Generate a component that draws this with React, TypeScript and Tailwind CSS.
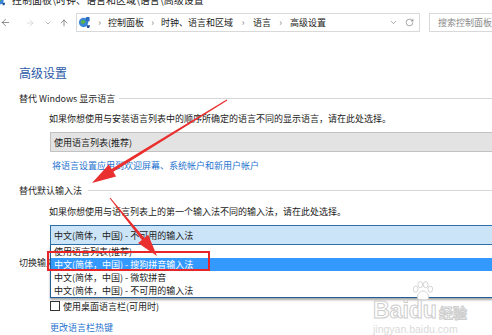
import React from 'react';
import { ArrowLeft, ArrowRight, ArrowUp, ChevronDown, RotateCw } from 'lucide-react';

const ControlPanelIcon: React.FC<{ className?: string }> = ({ className }) => (
  <svg viewBox="0 0 14 14" className={className}>
    <circle cx="6" cy="7" r="5" fill="#3a86d8" />
    <path d="M3 5.5 L6 4 L8.5 6 L6 8.5 L3.5 8 Z" fill="#57b04a" />
    <rect x="8.5" y="1" width="4" height="5" rx="0.8" fill="#2c6fc0" />
    <path d="M9 10 L13 10 L12 13 L10 13 Z" fill="#1c4f9a" />
  </svg>
);

const BaiduPaw: React.FC<{ className?: string }> = ({ className }) => (
  <svg viewBox="0 0 26 22" className={className} fill="white" stroke="#cfcfcf" strokeWidth="1">
    <ellipse cx="5" cy="9" rx="2.6" ry="3.4" />
    <ellipse cx="10" cy="4" rx="2.6" ry="3.4" />
    <ellipse cx="16" cy="4" rx="2.6" ry="3.4" />
    <ellipse cx="21" cy="9" rx="2.6" ry="3.4" />
    <path d="M13 11 C9 11 6 16 7 19 C8 21.5 11 20.5 13 20.5 C15 20.5 18 21.5 19 19 C20 16 17 11 13 11 Z" />
  </svg>
);

const Crumb: React.FC<{ children: React.ReactNode }> = ({ children }) => (
  <span className="whitespace-nowrap text-[#1a1a1a]">{children}</span>
);

const Sep = () => <span className="w-[17px] text-center text-[#7a7a7a]">›</span>;

const SectionTitle: React.FC<{ label: string; gap: string }> = ({ label, gap }) => (
  <div className="flex h-[14px] items-center">
    <span className="whitespace-nowrap text-[#1e1e1e]">{label}</span>
    <div className={`h-px flex-1 bg-[#d7d7d7] ${gap}`} />
  </div>
);

const options = [
  '使用语言列表(推荐)',
  '中文(简体，中国) - 搜狗拼音输入法',
  '中文(简体，中国) - 微软拼音',
  '中文(简体，中国) - 不可用的输入法',
];

export default function App() {
  return (
    <div className="relative h-[335px] w-[492px] overflow-hidden bg-white font-['Noto_Sans_CJK_SC',sans-serif] text-[9px] leading-none text-[#1a1a1a]">
      {/* window title, cut off at the top */}
      <div className="h-[6px] overflow-hidden">
        <div className="-mt-[6px] flex h-[12px] items-center">
          <ControlPanelIcon className="ml-[-5px] h-[11px] w-[11px]" />
          <span className="ml-[6px] whitespace-nowrap text-[10px] text-[#222]">控制面板\时钟、语言和区域\语言\高级设置</span>
        </div>
      </div>

      {/* address bar */}
      <div className="flex h-[26px] items-end">
        <div className="flex h-[19px] items-center">
          <ArrowLeft className="ml-[0px] h-[11px] w-[11px] text-[#555]" strokeWidth={1.4} />
          <ArrowRight className="ml-[14px] h-[10px] w-[10px] text-[#c4c4c4]" strokeWidth={1.4} />
          <ChevronDown className="ml-[9px] h-[8px] w-[8px] text-[#777]" strokeWidth={1.6} />
          <ArrowUp className="ml-[7px] h-[10px] w-[10px] text-[#555]" strokeWidth={1.5} />
        </div>
        <div className="ml-[7px] flex h-[19px] w-[378px] items-center border border-[#d9d9d9]">
          <ControlPanelIcon className="ml-[1px] h-[13px] w-[13px]" />
          <Sep />
          <Crumb>控制面板</Crumb>
          <Sep />
          <Crumb>时钟、语言和区域</Crumb>
          <span className="w-[20px] text-center text-[#7a7a7a]">›</span>
          <Crumb>语言</Crumb>
          <span className="w-[19px] text-center text-[#7a7a7a]">›</span>
          <Crumb>高级设置</Crumb>
          <div className="flex-1" />
          <ChevronDown className="h-[9px] w-[9px] text-[#666]" strokeWidth={1.5} />
          <RotateCw className="ml-[7px] mr-[5px] h-[9px] w-[9px] text-[#666]" strokeWidth={1.5} />
        </div>
        <div className="ml-[9px] flex h-[19px] flex-1 items-center border border-r-0 border-[#d9d9d9] pl-[8px]">
          <span className="whitespace-nowrap text-[#8a8a8a]">搜索控制面板</span>
        </div>
      </div>

      {/* content */}
      <div className="pl-[19px]">
        <div className="mt-[33px] flex h-[16px] items-center text-[12px] text-[#2b5aa6]">高级设置</div>

        <div className="mt-[10px]">
          <SectionTitle label="替代 Windows 显示语言" gap="ml-[4px]" />
        </div>
        <div className="mt-[6px] flex h-[14px] items-center pl-[30px] whitespace-nowrap">
          如果你想使用与安装语言列表中的顺序所确定的语言不同的显示语言，请在此处选择。
        </div>
        <div className="ml-[31px] mt-[7px] flex h-[20px] w-[460px] items-center border border-[#c2c2c2] bg-[#e3e3e3] pl-[3px]">
          使用语言列表(推荐)
        </div>
        <div className="mt-[6px] flex h-[14px] items-center pl-[33px] whitespace-nowrap text-[#1f73cf]">
          将语言设置应用到欢迎屏幕、系统帐户和新用户帐户
        </div>

        <div className="mt-[11px]">
          <SectionTitle label="替代默认输入法" gap="ml-[6px]" />
        </div>
        <div className="mt-[7px] flex h-[14px] items-center pl-[30px] whitespace-nowrap">
          如果你想使用与语言列表上的第一个输入法不同的输入法，请在此处选择。
        </div>
        <div className="relative ml-[31px] mt-[7px] w-[460px]">
          <div className="flex h-[20px] items-center border border-[#2f6fa8] bg-[#cce4f7] pl-[3px]">
            中文(简体，中国) - 不可用的输入法
          </div>
          {/* open drop-down list */}
          <div className="absolute left-0 right-0 top-full z-10 border border-t-0 border-[#1f5f96] bg-white shadow-[0_2px_2px_rgba(0,0,0,0.35)]">
            {options.map((o, i) => (
              <div
                key={o}
                className={`flex h-[13px] items-center pl-[3px] whitespace-nowrap ${i === 1 ? 'bg-[#3399ff] text-white' : ''}`}
              >
                {o}
              </div>
            ))}
          </div>
        </div>

        <div className="mt-[10px]">
          <SectionTitle label="切换输入法" gap="ml-[6px]" />
        </div>
        <div className="mt-[30px] flex h-[14px] items-center pl-[31px]">
          <span className="h-[10px] w-[10px] border border-[#333] bg-white" />
          <span className="ml-[3px] whitespace-nowrap">使用桌面语言栏(可用时)</span>
        </div>
        <div className="mt-[7px] flex h-[14px] items-center pl-[31px] whitespace-nowrap text-[#1f73cf]">
          更改语言栏热键
        </div>
      </div>

      {/* red annotation box */}
      <div className="absolute left-[47px] top-[251px] z-20 h-[20px] w-[163px] border-2 border-[#e8262a]" />

      {/* red arrows */}
      <svg className="pointer-events-none absolute inset-0 z-20" width="492" height="335" viewBox="0 0 492 335">
        <polygon
          fill="#ea2f2f"
          points="227.3,100.5 113.3,171.8 116.1,176.4 92,183 108.8,164.5 111.6,169.1 226.7,99.5"
        />
        <polygon
          fill="#ea2f2f"
          points="110.4,197.7 144.4,237.9 148.2,234.8 157,256 138.1,243 141.9,239.9 109.6,198.3"
        />
      </svg>

      {/* watermark */}
      <div className="pointer-events-none absolute left-[373px] top-[281px] z-30 flex flex-col">
        <div className="flex items-end">
          <span className="font-['Liberation_Sans',sans-serif] text-[23px] font-bold leading-none text-white [-webkit-text-stroke:1px_#cdcdcd]">
            Bai
          </span>
          <div className="relative flex flex-col items-center">
            <BaiduPaw className="mb-[-2px] h-[20px] w-[24px]" />
            <span className="font-['Liberation_Sans',sans-serif] text-[23px] font-bold leading-none text-white [-webkit-text-stroke:1px_#cdcdcd]">
              du
            </span>
          </div>
          <span className="ml-[2px] text-[14px] font-bold leading-[20px] text-white [-webkit-text-stroke:1px_#cdcdcd]">经验</span>
        </div>
        <span className="mt-[2px] font-['Liberation_Sans',sans-serif] text-[10.5px] leading-none text-[#dadada]">
          jingyan.baidu.com
        </span>
      </div>
    </div>
  );
}
